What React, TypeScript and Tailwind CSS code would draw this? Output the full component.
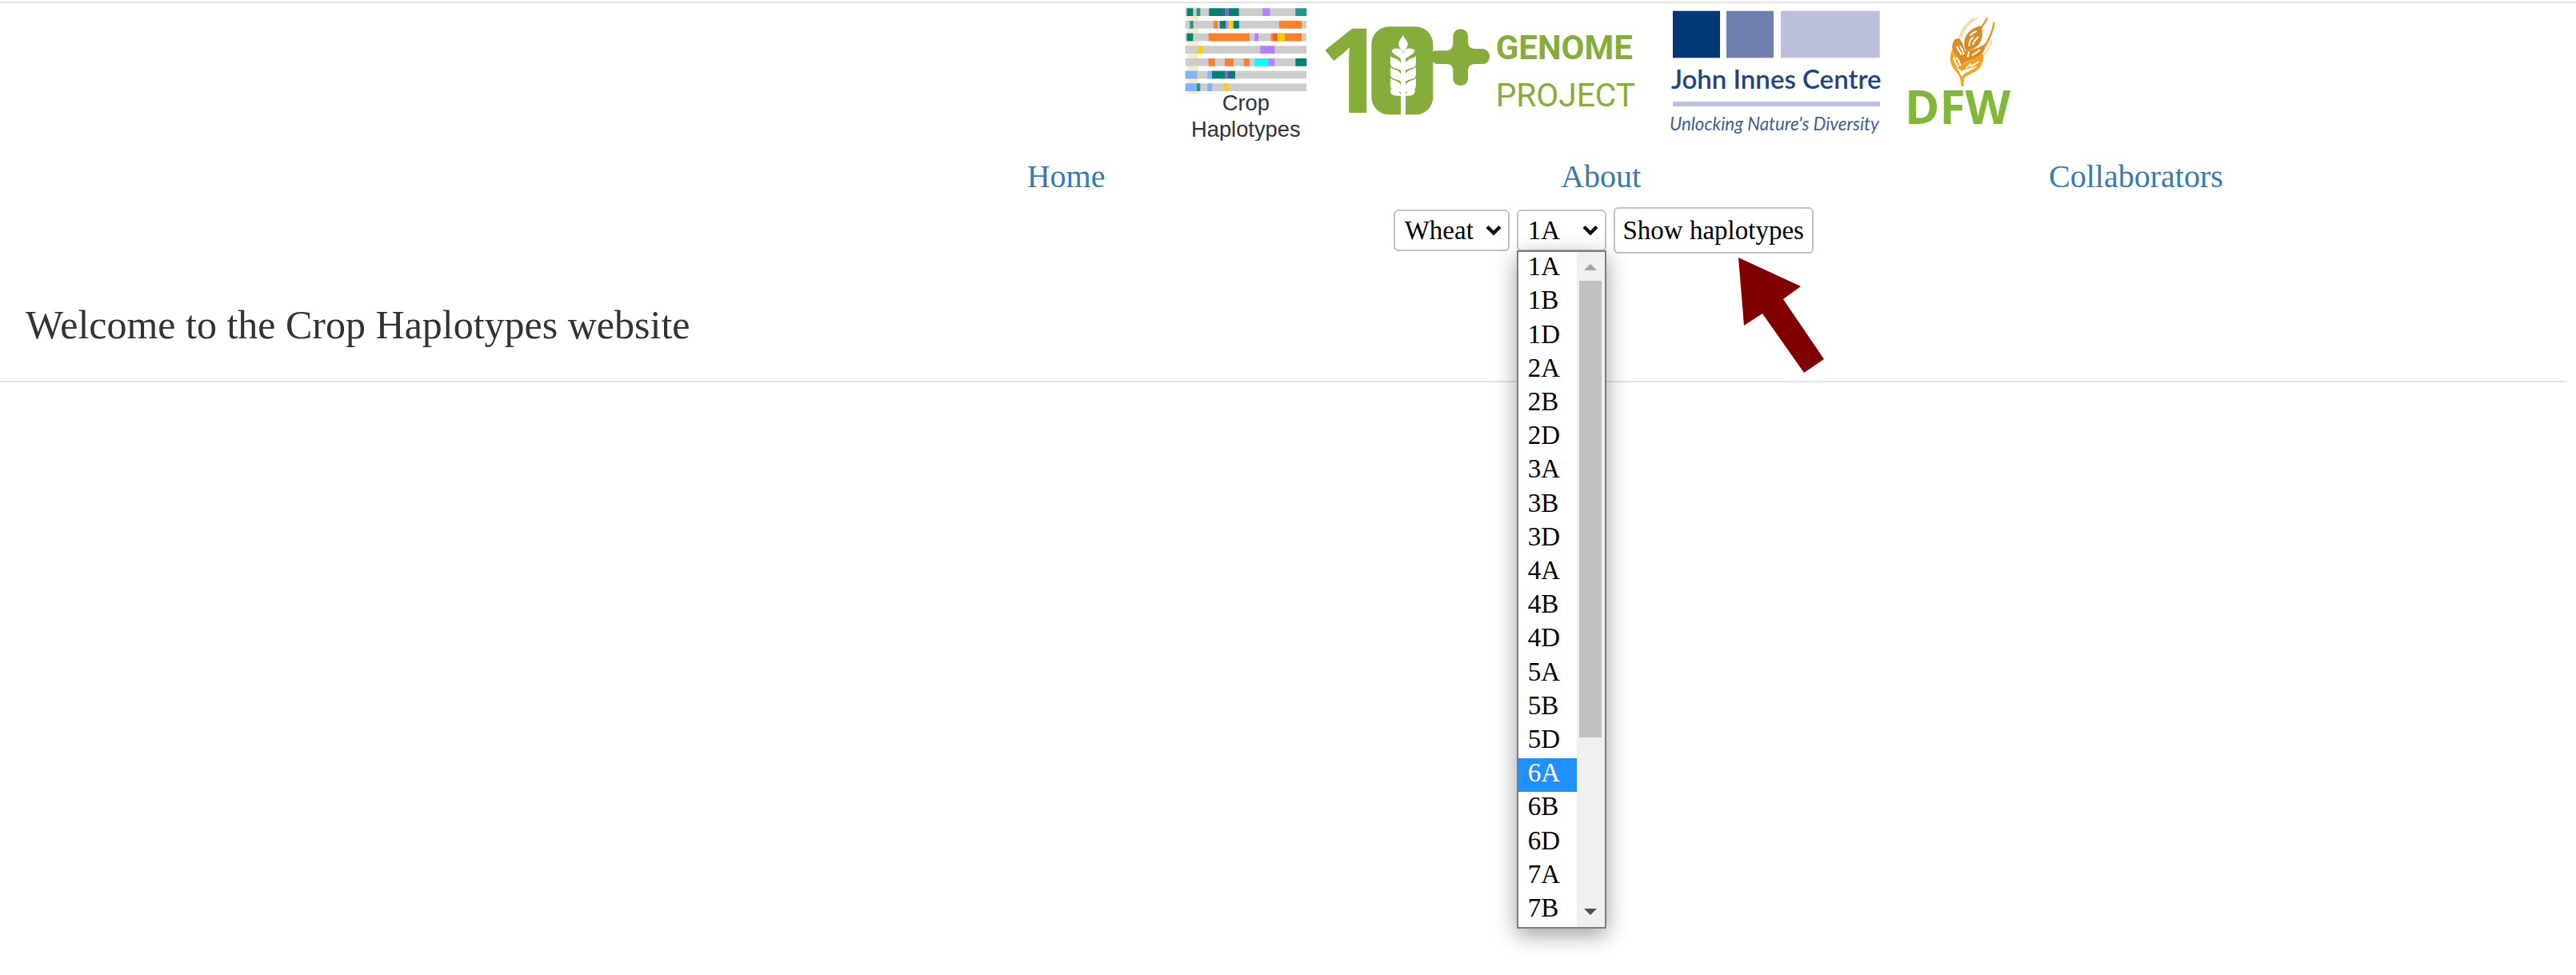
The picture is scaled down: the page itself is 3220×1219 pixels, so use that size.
import React from "react";

const chromosomes = [
  "1A", "1B", "1D", "2A", "2B", "2D", "3A", "3B", "3D", "4A",
  "4B", "4D", "5A", "5B", "5D", "6A", "6B", "6D", "7A", "7B", "7D",
];

const TEAL = "#008077";
const ORANGE = "#ff7f2a";
const PURPLE = "#b380ff";
const YELLOW = "#ffcc00";
const BLUE = "#80b3ff";

type Block = [number, number, string];

const tracks: Block[][] = [
  [[68, 23, TEAL], [104, 14, "#26968d"], [151, 61, TEAL], [212, 12, "#8d5fd3"], [224, 39, TEAL], [352, 27, PURPLE], [475, 42, "#26968d"]],
  [[79, 13, "#26968d"], [168, 16, ORANGE], [191, 23, TEAL], [214, 8, PURPLE], [222, 20, YELLOW], [242, 22, TEAL], [414, 84, ORANGE]],
  [[68, 23, TEAL], [149, 154, ORANGE], [322, 14, PURPLE], [383, 115, ORANGE], [391, 16, "#ff5533"], [407, 28, YELLOW]],
  [[111, 15, YELLOW], [343, 54, PURPLE]],
  [[149, 24, ORANGE], [210, 33, ORANGE], [281, 22, ORANGE], [322, 52, "#00ffff"], [374, 23, PURPLE], [475, 42, TEAL]],
  [[62, 44, BLUE], [145, 17, BLUE], [162, 50, TEAL], [212, 10, "#8d5fd3"], [222, 27, TEAL]],
  [[62, 43, BLUE], [105, 13, "#26968d"], [145, 18, BLUE], [208, 15, YELLOW]],
];

function CropHaplotypesLogo() {
  return (
    <svg className="h-[172px] w-[163px]" viewBox="60 12 489 516" role="img" aria-label="Crop Haplotypes">
      <rect x="68" y="26" width="44" height="326" fill="#f5eccb" />
      {tracks.map((blocks, row) => (
        <g key={row}>
          <rect x="62" y={31 + row * 47} width="454" height="29" fill="#cccccc" />
          {blocks.map(([x, w, fill], i) => (
            <rect key={i} x={x} y={31 + row * 47} width={w} height="29" fill={fill} />
          ))}
        </g>
      ))}
      <text x="289" y="415" textAnchor="middle" fontSize="82" fill="#333333" className="font-['Liberation_Sans',sans-serif]">Crop</text>
      <text x="289" y="514" textAnchor="middle" fontSize="82" fill="#333333" className="font-['Liberation_Sans',sans-serif]">Haplotypes</text>
    </svg>
  );
}

function GenomeProjectLogo() {
  return (
    <svg className="-ml-6 h-[172px] w-[406px] overflow-visible" viewBox="-33 12 1218 516" role="img" aria-label="10+ Genome Project" fill="#86ad3b">
      <text x="212" y="424" textAnchor="end" fontSize="440" className="font-['Noto_Sans',sans-serif] font-bold">1</text>
      <rect x="160" y="100" width="231" height="330" rx="66" />
      <path d="M494 109c16 0 28 12 28 28v20c0 15 9 26 24 26h29c16 0 28 12 28 29s-12 28-28 28h-27c-16 0-26 9-26 25v29c0 16-12 27-28 27s-28-11-28-27v-29c0-15-8-25-24-25h-29c-16 0-27-5-27-28s11-22 27-22h24c18 0 29-11 29-29v-24c0-16 12-28 28-28z" />
      <g fill="#ffffff">
        <path d="M278 130c4 15 18 22 18 36 0 13-12 19-17 32-5-13-17-19-17-32 0-14 12-21 16-36z" />
        <rect x="270" y="204" width="18" height="228" />
        <path d="M235 190c6-10 32-12 38-2l6 14v32c-6-20-34-22-44-44z" />
        <path d="M323 190c-6-10-32-12-38-2l-6 14v32c6-20 34-22 44-44z" />
        {[0, 41, 82].map((dy) => (
          <g key={dy} transform={`translate(0 ${dy})`}>
            <path d="M231 211c10 10 38 8 40 32v22c-12-10-34-8-38-18-3-9-2-22-2-36z" />
            <path d="M327 211c-10 10-38 8-40 32v22c12-10 34-8 38-18 3-9 2-22 2-36z" />
          </g>
        ))}
        <path d="M231 333c12 4 34 2 40 26-14 0-30 0-36-6-5-6-4-12-4-20z" />
        <path d="M323 333c-12 4-30 2-36 26 14 0 26 0 32-6 5-6 4-12 4-20z" />
      </g>
      <text x="626" y="221" fontSize="126" className="font-['Roboto',sans-serif] font-bold">GENOME</text>
      <text x="626" y="399" fontSize="122" className="font-['Roboto',sans-serif]">PROJECT</text>
    </svg>
  );
}

function JohnInnesLogo() {
  return (
    <svg className="h-[172px] w-[268px] overflow-visible" viewBox="75 12 804 516" role="img" aria-label="John Innes Centre">
      <rect x="90" y="41" width="177" height="176" fill="#033877" />
      <rect x="291" y="41" width="177" height="176" fill="#6f7fae" />
      <rect x="495" y="41" width="371" height="176" fill="#bbc0db" />
      <text x="84" y="333" fontSize="99" fill="#1d4582" className="font-['Lato',sans-serif] font-semibold">John Innes Centre</text>
      <rect x="90" y="381" width="777" height="18" fill="#bbc0db" />
      <text x="78" y="488" fontSize="67" fill="#3c5f99" className="font-['Lato',sans-serif] italic">Unlocking Nature's Diversity</text>
    </svg>
  );
}

function DfwLogo() {
  return (
    <svg className="h-[172px] w-[138px] overflow-visible" viewBox="969 12 414 516" role="img" aria-label="DFW">
      <g fill="none" strokeLinecap="round">
        <g stroke="#f5d3a5" strokeWidth="5">
          <path d="M1232 68c-30 14-52 40-62 74" />
          <path d="M1216 70c-22 16-42 40-52 70" />
          <path d="M1286 152c-4 20-14 38-26 52" />
          <path d="M1276 152c-4 14-10 24-18 34" />
        </g>
        <g stroke="#e8962a" strokeWidth="7">
          <path d="M1268 70c-4 12-14 18-20 34" />
          <path d="M1294 86c-3 30-16 58-34 86" />
        </g>
      </g>
      <path d="M1246 96c8 26 6 52-8 70-10 14-28 20-48 26-8-16-10-38-2-54 10-22 32-36 58-42z" fill="#d98a24" />
      <path d="M1148 146c-10 14-14 32-6 50 6 14 18 24 28 50 18-14 36-18 54-26 26-10 38-30 38-58-18 18-44 22-76 30-4-20-12-38-22-48z" fill="#dd8d25" />
      <path d="M1138 186c-10 22-10 48 2 66 10 16 24 26 28 44l4 28h8l2-28c10-20 56-22 68-58 6-16 6-28 2-38-16 18-52 28-80 44-6-24-22-40-34-58z" fill="#f7a021" />
      <g fill="none" stroke="#ffffff" strokeLinecap="round" strokeWidth="6">
        <path d="M1202 172c-2-14 4-24 14-32M1216 166c2-10 8-18 18-26M1206 132c8-8 14-12 22-14" />
        <path d="M1156 176c4 12 12 18 16 28M1168 174c6 8 10 18 12 28M1196 212c2-6 4-8 4-16M1214 206c10-4 18-10 26-18" />
        <path d="M1144 216c2 12 8 22 16 34M1154 216c6 8 12 18 14 28M1190 254c6-4 12-8 16-14M1208 248c10-4 18-8 28-16" />
      </g>
      <path d="M1148 250c12 12 20 22 25 38 12-20 42-22 60-42-18 8-38 10-60 20-6-6-14-10-25-16z" fill="#ffffff" />
      <text x="960" y="465" fontSize="176" fill="#82b83a" className="font-['Open_Sans',sans-serif] font-bold">DFW</text>
    </svg>
  );
}

function Chevron() {
  return (
    <svg className="pointer-events-none absolute top-[19px] right-[10px] h-[14px] w-5" viewBox="0 0 20 14" aria-hidden="true">
      <path d="M2 2.5l8 8 8-8" fill="none" stroke="#111111" strokeWidth="4.4" />
    </svg>
  );
}

function ChromosomeMenu() {
  return (
    <div className="absolute top-full left-0 z-10 -mt-px flex h-[848px] w-full border-2 border-[#7d7d7d] bg-white shadow-[0_8px_26px_rgba(0,0,0,0.38)]">
      <ul role="listbox" aria-label="Chromosome" className="flex flex-1 flex-col">
        {chromosomes.slice(0, 20).map((name) => (
          <li
            key={name}
            role="option"
            aria-selected={name === "6A"}
            className={
              name === "6A"
                ? "flex flex-1 items-center bg-[#1e90ff] pl-3 leading-9 text-white"
                : "flex flex-1 items-center pl-3 leading-9 text-black"
            }
          >
            <span className="mb-1.5">{name}</span>
          </li>
        ))}
      </ul>
      <div className="flex w-[35px] flex-col items-center bg-[#f0f0f0]" aria-hidden="true">
        <svg className="mt-[15px] h-2 w-4" viewBox="0 0 16 8">
          <path d="M8 0l8 8H0z" fill="#a3a3a3" />
        </svg>
        <div className="mt-[13px] h-[571px] w-7 bg-[#c1c1c1]" />
        <svg className="mt-auto mb-[15px] h-2 w-4" viewBox="0 0 16 8">
          <path d="M0 0h16L8 8z" fill="#505050" />
        </svg>
      </div>
    </div>
  );
}

export default function App() {
  const [species, setSpecies] = React.useState("Wheat");
  const [chromosome, setChromosome] = React.useState("1A");

  return (
    <div className="min-h-screen bg-white pt-[2px] font-['Liberation_Serif','Times_New_Roman',serif]">
      <header className="border-t-2 border-[#dfe2e6]">
        <div className="mr-[6.7%] ml-[31%]">
          <div className="flex justify-center gap-[30px]">
            <CropHaplotypesLogo />
            <GenomeProjectLogo />
            <JohnInnesLogo />
            <DfwLogo />
          </div>
          <nav className="mt-[22px] grid grid-cols-3 text-center text-[40px] leading-[46px] text-[#337ab7]">
            <div><a href="#home">Home</a></div>
            <div><a href="#about">About</a></div>
            <div><a href="#collaborators">Collaborators</a></div>
          </nav>
          <form
            className="mt-[15px] flex items-center justify-center gap-[9px] pl-1.5 text-[33px] text-black"
            onSubmit={(e) => e.preventDefault()}
          >
            <div className="relative">
              <select
                aria-label="Species"
                value={species}
                onChange={(e) => setSpecies(e.target.value)}
                className="block h-[52px] w-[145px] appearance-none rounded-md border-2 border-[#c2c2c2] bg-white pl-3 leading-9"
              >
                <option>Wheat</option>
              </select>
              <Chevron />
            </div>
            <div className="relative">
              <select
                aria-label="Chromosome"
                value={chromosome}
                onChange={(e) => setChromosome(e.target.value)}
                className="block h-[52px] w-28 appearance-none rounded-md border-2 border-[#c2c2c2] bg-white pl-3 leading-9"
              >
                {chromosomes.map((name) => (
                  <option key={name}>{name}</option>
                ))}
              </select>
              <Chevron />
              <ChromosomeMenu />
            </div>
            <div className="relative">
              <button type="submit" className="block h-[58px] w-[250px] rounded-md border-2 border-[#c2c2c2] bg-white leading-9 whitespace-nowrap">
                Show haplotypes
              </button>
              <svg className="pointer-events-none absolute top-[62px] left-[155px] h-[146px] w-[108px]" viewBox="0 0 108 146" aria-hidden="true">
                <path d="M1 1l78 36-22 16 51 75-25 17-52-74-23 15z" fill="#800000" />
              </svg>
            </div>
          </form>
        </div>
      </header>
      <main>
        <h1 className="mt-[59px] pl-8 text-[50px] leading-[60px] text-[#333333]">Welcome to the Crop Haplotypes website</h1>
        <hr className="mt-10 mr-3 border-t-2 border-[#e2e2e2]" />
      </main>
    </div>
  );
}
